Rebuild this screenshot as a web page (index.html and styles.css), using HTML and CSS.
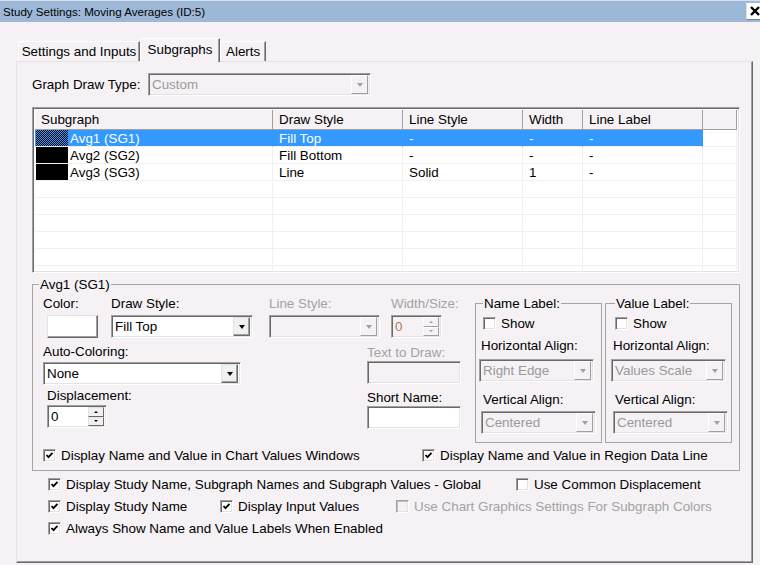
FILE: index.html
```html
<!DOCTYPE html>
<html lang="en">
<head>
    <meta charset="UTF-8">
    <meta name="viewport" content="width=device-width, initial-scale=1.0">
    <title>Study Settings: Moving Averages (ID:5)</title>
    <link rel="stylesheet" href="styles.css">
</head>
<body>
    <div class="title-bar">
        <span class="title-text">Study Settings: Moving Averages (ID:5)</span>
        <span class="close-btn">
            <svg width="12" height="12" viewBox="0 0 12 12"><path d="M2 2 L10 10 M10 2 L2 10" stroke="#000" stroke-width="2.4"/></svg>
        </span>
    </div>

    <div class="tabs">
        <div class="tab tab-first">Settings and Inputs</div>
        <div class="tab tab-active">Subgraphs</div>
        <div class="tab">Alerts</div>
    </div>

    <div class="tab-panel">
        <div class="draw-type-row">
            <span class="draw-type-label">Graph Draw Type:</span>
            <div class="combo combo-disabled draw-type-combo">
                <span class="combo-text">Custom</span>
                <span class="combo-btn"><i class="arrow"></i></span>
            </div>
        </div>

        <!-- subgraph list -->
        <div class="list-view">
            <div class="list-row list-header">
                <div class="cell">Subgraph</div>
                <div class="cell">Draw Style</div>
                <div class="cell">Line Style</div>
                <div class="cell">Width</div>
                <div class="cell">Line Label</div>
                <div class="cell"></div>
            </div>
            <div class="list-body">
                <div class="list-row row-selected">
                    <div class="cell cell-name"><span class="swatch swatch-checked"></span><span class="name-text">Avg1 (SG1)</span></div>
                    <div class="cell">Fill Top</div>
                    <div class="cell">-</div>
                    <div class="cell">-</div>
                    <div class="cell">-</div>
                    <div class="cell cell-blank"></div>
                </div>
                <div class="list-row">
                    <div class="cell cell-name"><span class="swatch"></span><span class="name-text">Avg2 (SG2)</span></div>
                    <div class="cell">Fill Bottom</div>
                    <div class="cell">-</div>
                    <div class="cell">-</div>
                    <div class="cell">-</div>
                    <div class="cell"></div>
                </div>
                <div class="list-row">
                    <div class="cell cell-name"><span class="swatch"></span><span class="name-text">Avg3 (SG3)</span></div>
                    <div class="cell">Line</div>
                    <div class="cell">Solid</div>
                    <div class="cell">1</div>
                    <div class="cell">-</div>
                    <div class="cell"></div>
                </div>
                <div class="list-row"><div class="cell"></div><div class="cell"></div><div class="cell"></div><div class="cell"></div><div class="cell"></div><div class="cell"></div></div>
                <div class="list-row"><div class="cell"></div><div class="cell"></div><div class="cell"></div><div class="cell"></div><div class="cell"></div><div class="cell"></div></div>
                <div class="list-row"><div class="cell"></div><div class="cell"></div><div class="cell"></div><div class="cell"></div><div class="cell"></div><div class="cell"></div></div>
                <div class="list-row"><div class="cell"></div><div class="cell"></div><div class="cell"></div><div class="cell"></div><div class="cell"></div><div class="cell"></div></div>
                <div class="list-row"><div class="cell"></div><div class="cell"></div><div class="cell"></div><div class="cell"></div><div class="cell"></div><div class="cell"></div></div>
                <div class="list-row"><div class="cell"></div><div class="cell"></div><div class="cell"></div><div class="cell"></div><div class="cell"></div><div class="cell"></div></div>
            </div>
        </div>

        <!-- selected subgraph settings -->
        <fieldset class="group-box">
            <legend>Avg1 (SG1)</legend>
            <div class="group-body">
                <div class="controls-area">
                    <div class="controls-row">
                        <div class="ctl ctl-color">
                            <div class="ctl-label">Color:</div>
                            <div class="color-btn"></div>
                        </div>
                        <div class="ctl ctl-draw-style">
                            <div class="ctl-label">Draw Style:</div>
                            <div class="combo draw-style-combo">
                                <span class="combo-text">Fill Top</span>
                                <span class="combo-btn"><i class="arrow"></i></span>
                            </div>
                        </div>
                        <div class="ctl ctl-line-style">
                            <div class="ctl-label is-disabled">Line Style:</div>
                            <div class="combo combo-disabled line-style-combo">
                                <span class="combo-text"></span>
                                <span class="combo-btn"><i class="arrow"></i></span>
                            </div>
                        </div>
                        <div class="ctl">
                            <div class="ctl-label is-disabled">Width/Size:</div>
                            <div class="spin spin-disabled width-spin">
                                <span class="spin-text">0</span>
                                <span class="spin-btns">
                                    <span class="spin-btn"><i class="arrow-up"></i></span>
                                    <span class="spin-btn"><i class="arrow-down"></i></span>
                                </span>
                            </div>
                        </div>
                    </div>
                    <div class="controls-row">
                        <div class="left-col">
                            <div class="ctl-label">Auto-Coloring:</div>
                            <div class="combo auto-color-combo">
                                <span class="combo-text">None</span>
                                <span class="combo-btn"><i class="arrow"></i></span>
                            </div>
                            <div class="ctl-label displacement-label">Displacement:</div>
                            <div class="spin displacement-spin">
                                <span class="spin-text">0</span>
                                <span class="spin-btns">
                                    <span class="spin-btn"><i class="arrow-up"></i></span>
                                    <span class="spin-btn"><i class="arrow-down"></i></span>
                                </span>
                            </div>
                        </div>
                        <div class="right-col">
                            <div class="ctl-label is-disabled">Text to Draw:</div>
                            <div class="text-box text-box-disabled"></div>
                            <div class="ctl-label short-name-label">Short Name:</div>
                            <div class="text-box"></div>
                        </div>
                    </div>
                </div>

                <fieldset class="label-box">
                    <legend>Name Label:</legend>
                    <div class="check-item show-check"><span class="check"></span>Show</div>
                    <div class="ctl-label h-align-label">Horizontal Align:</div>
                    <div class="combo combo-disabled align-combo h-combo">
                        <span class="combo-text">Right Edge</span>
                        <span class="combo-btn"><i class="arrow"></i></span>
                    </div>
                    <div class="ctl-label v-align-label">Vertical Align:</div>
                    <div class="combo combo-disabled align-combo v-combo">
                        <span class="combo-text">Centered</span>
                        <span class="combo-btn"><i class="arrow"></i></span>
                    </div>
                </fieldset>

                <fieldset class="label-box label-box-value">
                    <legend>Value Label:</legend>
                    <div class="check-item show-check"><span class="check"></span>Show</div>
                    <div class="ctl-label h-align-label">Horizontal Align:</div>
                    <div class="combo combo-disabled align-combo h-combo">
                        <span class="combo-text">Values Scale</span>
                        <span class="combo-btn"><i class="arrow"></i></span>
                    </div>
                    <div class="ctl-label v-align-label">Vertical Align:</div>
                    <div class="combo combo-disabled align-combo v-combo">
                        <span class="combo-text">Centered</span>
                        <span class="combo-btn"><i class="arrow"></i></span>
                    </div>
                </fieldset>
            </div>

            <div class="group-checks">
                <div class="check-item chart-values-check"><span class="check is-checked"><svg viewBox="0 0 9 9"><path d="M1.5 4 L3.5 6.2 L7.5 1.8" fill="none" stroke="#000" stroke-width="1.8"/></svg></span>Display Name and Value in Chart Values Windows</div>
                <div class="check-item"><span class="check is-checked"><svg viewBox="0 0 9 9"><path d="M1.5 4 L3.5 6.2 L7.5 1.8" fill="none" stroke="#000" stroke-width="1.8"/></svg></span>Display Name and Value in Region Data Line</div>
            </div>
        </fieldset>

        <!-- global options -->
        <div class="global-checks">
            <div class="global-row">
                <div class="check-item col-global"><span class="check is-checked"><svg viewBox="0 0 9 9"><path d="M1.5 4 L3.5 6.2 L7.5 1.8" fill="none" stroke="#000" stroke-width="1.8"/></svg></span>Display Study Name, Subgraph Names and Subgraph Values - Global</div>
                <div class="check-item"><span class="check"></span>Use Common Displacement</div>
            </div>
            <div class="global-row">
                <div class="check-item col-study-name"><span class="check is-checked"><svg viewBox="0 0 9 9"><path d="M1.5 4 L3.5 6.2 L7.5 1.8" fill="none" stroke="#000" stroke-width="1.8"/></svg></span>Display Study Name</div>
                <div class="check-item col-input-values"><span class="check is-checked"><svg viewBox="0 0 9 9"><path d="M1.5 4 L3.5 6.2 L7.5 1.8" fill="none" stroke="#000" stroke-width="1.8"/></svg></span>Display Input Values</div>
                <div class="check-item is-disabled"><span class="check check-disabled"></span>Use Chart Graphics Settings For Subgraph Colors</div>
            </div>
            <div class="global-row">
                <div class="check-item"><span class="check is-checked"><svg viewBox="0 0 9 9"><path d="M1.5 4 L3.5 6.2 L7.5 1.8" fill="none" stroke="#000" stroke-width="1.8"/></svg></span>Always Show Name and Value Labels When Enabled</div>
            </div>
        </div>
    </div>
</body>
</html>
```

FILE: styles.css
```css
* {
    box-sizing: border-box;
}

body {
    margin: 0;
    width: 760px;
    height: 565px;
    overflow: hidden;
    background: #f5f1f5;
    font-family: "Liberation Sans", Arial, sans-serif;
    font-size: 13.4px;
    line-height: 15px;
    color: #000;
}

/* title bar */
.title-bar {
    height: 22px;
    background: #9db8d6;
    border-top: 1px solid #d4e0ee;
    display: flex;
    align-items: center;
    justify-content: space-between;
    padding-left: 3px;
    font-size: 11.6px;
    overflow: hidden;
}

.close-btn {
    width: 17px;
    height: 17px;
    margin-right: -3px;
    margin-top: -1px;
    background: #fff;
    border: 1px solid;
    border-color: #fff #808080 #808080 #e0e0e0;
    display: flex;
    align-items: center;
    justify-content: center;
}

/* tabs */
.tabs {
    height: 39px;
    display: flex;
    align-items: flex-end;
    padding-left: 18px;
}

.tab {
    height: 20px;
    padding: 0 5px;
    display: flex;
    align-items: center;
    justify-content: center;
    white-space: nowrap;
    border: 1px solid;
    border-bottom: none;
    border-color: #fff #696969 transparent #fff;
    box-shadow: inset -1px 0 #a0a0a0;
}

.tab-first {
    width: 122px;
}

.tab-active {
    width: 80px;
    height: 24px;
    margin-bottom: -1px;
    padding-bottom: 3px;
    position: relative;
    z-index: 1;
    background: #f5f1f5;
}

/* tab panel */
.tab-panel {
    margin-left: 16px;
    width: 737px;
    height: 502px;
    border: 1px solid;
    border-color: #e3e3e3 #696969 #696969 #e3e3e3;
    box-shadow: inset -1px -1px #a0a0a0;
    padding: 11px 0 0 15px;
}

.draw-type-row {
    display: flex;
    align-items: center;
}

.draw-type-label {
    width: 116px;
}

/* combo boxes */
.combo {
    height: 23px;
    display: flex;
    align-items: center;
    background: #fff;
    border: 1px solid;
    border-color: #a0a0a0 #fff #fff #a0a0a0;
    box-shadow: inset 1px 1px #696969, inset -1px -1px #e3e3e3;
    padding: 2px 2px 2px 3px;
}

.combo-text {
    flex: 1;
    white-space: nowrap;
    overflow: hidden;
}

.combo-btn {
    width: 17px;
    height: 19px;
    flex: none;
    background: #f0f0f0;
    border: 1px solid;
    border-color: #e3e3e3 #696969 #696969 #e3e3e3;
    box-shadow: inset -1px -1px #a0a0a0;
    display: flex;
    align-items: center;
    justify-content: center;
}

.arrow {
    width: 0;
    height: 0;
    border-left: 3.5px solid transparent;
    border-right: 3.5px solid transparent;
    border-top: 4px solid #000;
}

.combo-disabled {
    background: #f5f1f5;
    color: #9a9a9a;
}

.combo-disabled .combo-btn {
    background: #f5f1f5;
    border-color: #fff #a0a0a0 #a0a0a0 #fff;
    box-shadow: none;
}

.combo-disabled .arrow {
    border-top-color: #a0a0a0;
}

.draw-type-combo {
    width: 223px;
}

/* list view */
.list-view {
    margin-top: 11px;
    width: 708px;
    height: 166px;
    border: 1px solid;
    border-color: #a0a0a0 #fff #fff #a0a0a0;
    box-shadow: inset 1px 1px #696969, inset -1px -1px #e3e3e3;
    padding: 2px;
    background: #fff;
    overflow: hidden;
}

.list-row {
    display: grid;
    grid-template-columns: 238px 130px 120px 60px 120px 1fr;
    height: 17px;
}

.list-header {
    height: 20px;
    background: #f5f1f5;
    border-bottom: 1px solid #a0a0a0;
}

.list-header .cell {
    border-right: 1px solid #a0a0a0;
    padding: 2px 6px 0 6px;
}

.list-body {
    height: 140px;
    overflow: hidden;
}

.list-body .cell {
    border-right: 1px solid #f0f0f0;
    border-bottom: 1px solid #f0f0f0;
    padding: 1px 6px 0 6px;
    white-space: nowrap;
    line-height: 15px;
}

.list-body .cell-name {
    padding: 0 0 0 1px;
    display: flex;
}

.swatch {
    width: 32px;
    height: 16px;
    background: #000;
    flex: none;
}

.swatch-checked {
    background: repeating-conic-gradient(#000 0 25%, #3399ff 0 50%) 0 0 / 2px 2px;
}

.name-text {
    padding: 1px 0 0 2px;
}

.row-selected .cell {
    background: #3399ff;
    color: #fff;
    border-right-color: #3399ff;
}

.row-selected .cell-blank {
    background: #fff;
    border-right-color: #f0f0f0;
}

/* group box */
.group-box {
    margin: 4px 0 0 0;
    width: 708px;
    border: 1px solid #a5a5a5;
    padding: 4px 7px 7px 10px;
}

.group-box > legend {
    padding: 0 1px;
    margin-left: -4px;
}

.group-body {
    display: flex;
}

.controls-area {
    width: 432px;
}

.controls-row {
    display: flex;
}

.controls-row + .controls-row {
    margin-top: 6px;
}

.ctl-label {
    height: 15px;
    white-space: nowrap;
}

.is-disabled {
    color: #a3a3a3;
}

.ctl-color {
    width: 68px;
}

.ctl-draw-style {
    width: 158px;
}

.ctl-line-style {
    width: 122px;
}

.ctl .ctl-label {
    margin-bottom: 4px;
}

.color-btn {
    margin-left: 4px;
    width: 51px;
    height: 23px;
    background: #fff;
    border: 1px solid;
    border-color: #e3e3e3 #696969 #696969 #e3e3e3;
    box-shadow: inset -1px -1px #a0a0a0;
}

.draw-style-combo {
    width: 142px;
}

.line-style-combo {
    width: 111px;
}

/* spinners */
.spin {
    height: 23px;
    display: flex;
    align-items: center;
    background: #fff;
    border: 1px solid;
    border-color: #a0a0a0 #fff #fff #a0a0a0;
    box-shadow: inset 1px 1px #696969, inset -1px -1px #e3e3e3;
    padding: 2px 2px 2px 3px;
}

.spin-text {
    flex: 1;
}

.spin-btns {
    width: 16px;
    height: 19px;
    display: flex;
    flex-direction: column;
}

.spin-btn {
    flex: 1;
    border: 1px solid;
    border-color: #e3e3e3 #696969 #696969 #e3e3e3;
    background: #f0f0f0;
    display: flex;
    align-items: center;
    justify-content: center;
}

.arrow-up,
.arrow-down {
    width: 0;
    height: 0;
    border-left: 2px solid transparent;
    border-right: 2px solid transparent;
}

.arrow-up {
    border-bottom: 2px solid #000;
}

.arrow-down {
    border-top: 2px solid #000;
}

.spin-disabled {
    background: #f5f1f5;
    color: #b07a50;
}

.spin-disabled .spin-btn {
    background: #f5f1f5;
    border-color: #fff #a0a0a0 #a0a0a0 #fff;
}

.spin-disabled .arrow-up {
    border-bottom-color: #a0a0a0;
}

.spin-disabled .arrow-down {
    border-top-color: #a0a0a0;
}

.width-spin {
    width: 51px;
}

.left-col {
    width: 324px;
}

.auto-color-combo {
    margin-top: 3px;
    width: 198px;
}

.displacement-label {
    margin: 3px 0 0 4px;
}

.displacement-spin {
    margin: 2px 0 0 4px;
    width: 60px;
}

.right-col {
    width: 94px;
    padding-top: 1px;
}

.text-box {
    margin-top: 1px;
    height: 23px;
    background: #fff;
    border: 1px solid;
    border-color: #a0a0a0 #fff #fff #a0a0a0;
    box-shadow: inset 1px 1px #696969, inset -1px -1px #e3e3e3;
}

.text-box-disabled {
    background: #f5f1f5;
}

.short-name-label {
    margin-top: 6px;
}

/* name / value label boxes */
.label-box {
    margin: 0;
    width: 127px;
    height: 147px;
    border: 1px solid #a5a5a5;
    padding: 5px 3px 0 3px;
}

.label-box-value {
    margin-left: 3px;
    padding-left: 5px;
}

.label-box > legend {
    padding: 0 1px;
    margin-left: 4px;
}

.check-item {
    display: flex;
    align-items: center;
    gap: 5px;
    white-space: nowrap;
}

.check {
    width: 13px;
    height: 13px;
    flex: none;
    background: #fff;
    border: 1px solid;
    border-color: #a0a0a0 #fff #fff #a0a0a0;
    box-shadow: inset 1px 1px #696969, inset -1px -1px #e3e3e3;
    display: flex;
    align-items: center;
    justify-content: center;
}

.check svg {
    width: 9px;
    height: 9px;
}

.check-disabled {
    background: #f5f1f5;
    box-shadow: inset 1px 1px #c0c0c0, inset -1px -1px #e3e3e3;
}

.show-check {
    margin-left: 4px;
}

.h-align-label {
    margin: 7px 0 0 2px;
}

.h-combo {
    margin-top: 6px;
    width: 115px;
}

.v-align-label {
    margin: 10px 0 0 4px;
}

.v-combo {
    margin: 4px 0 0 2px;
    width: 115px;
}

.group-checks {
    display: flex;
    margin-top: 4px;
    height: 16px;
}

.chart-values-check {
    width: 379px;
}

/* global options */
.global-checks {
    margin: 2px 0 0 16px;
}

.global-row {
    display: flex;
    height: 22px;
}

.col-global {
    width: 468px;
}

.col-study-name {
    width: 172px;
}

.col-input-values {
    width: 176px;
}
```
